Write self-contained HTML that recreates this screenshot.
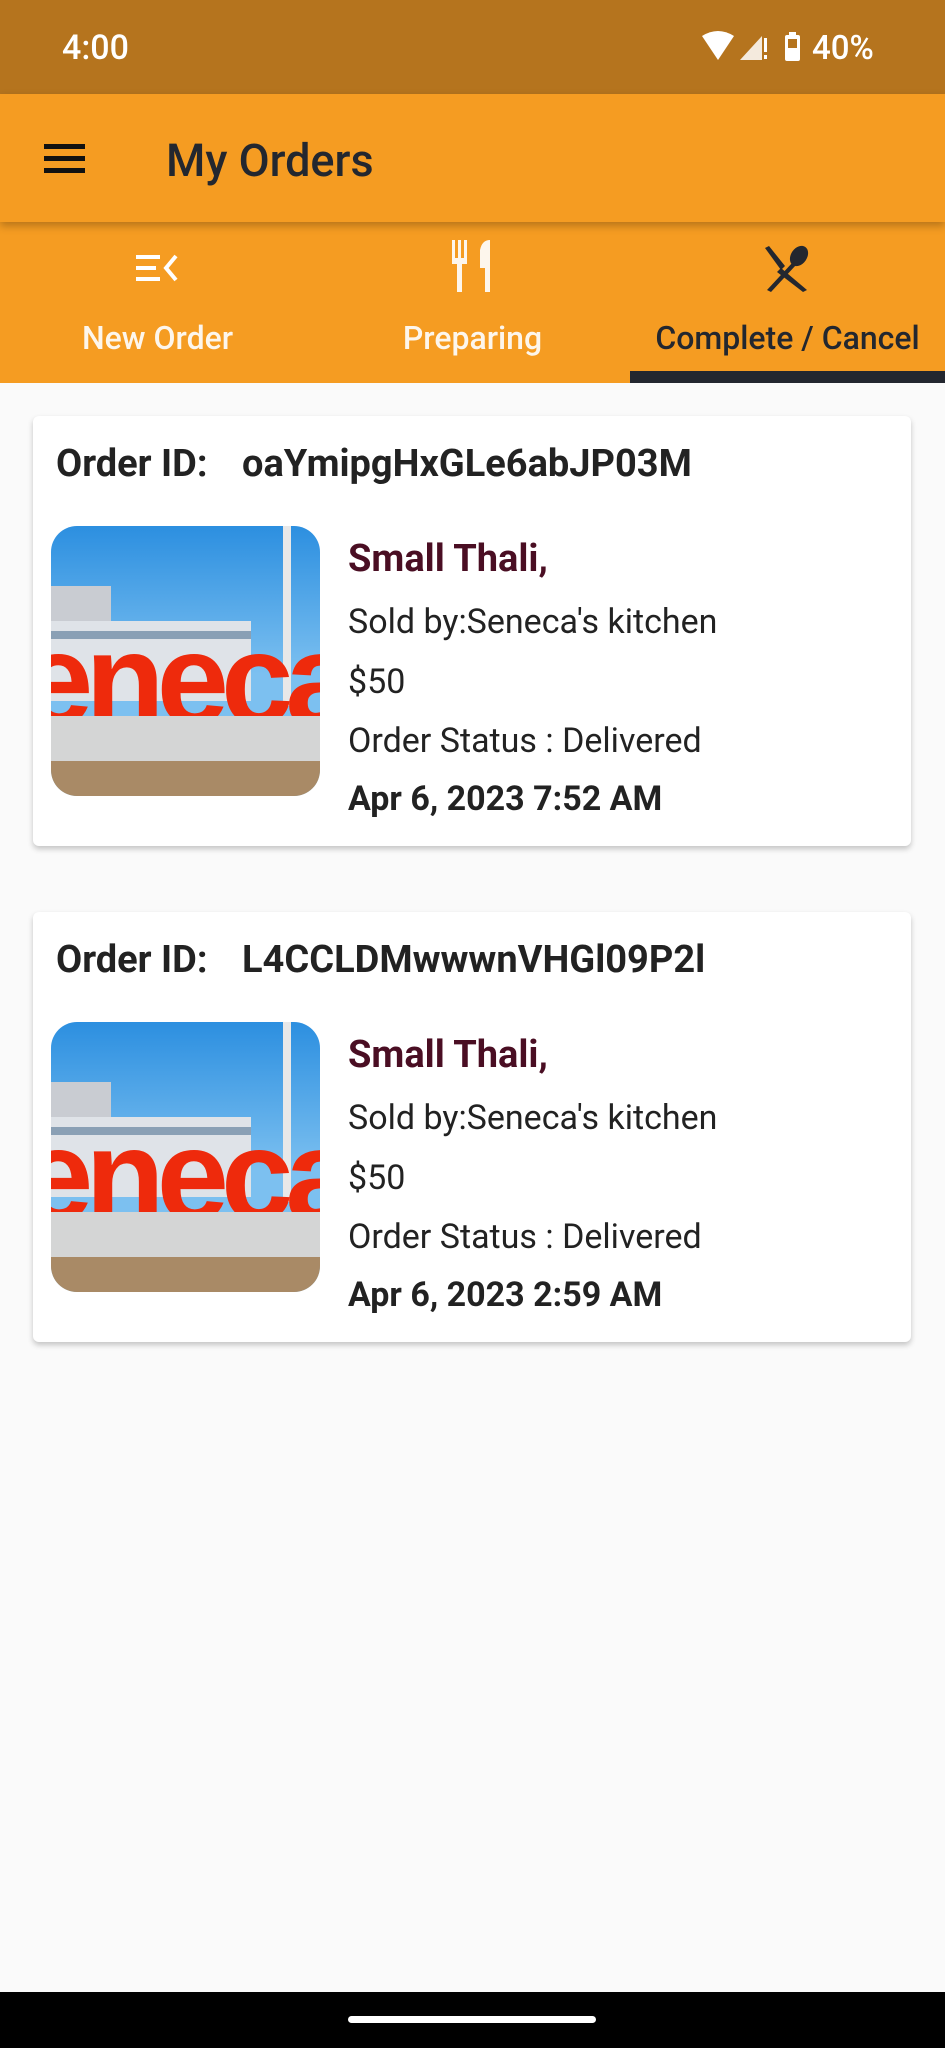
<!DOCTYPE html>
<html><head><meta charset="utf-8"><style>
*{margin:0;padding:0;box-sizing:border-box}
body{width:945px;height:2048px;background:#fafafa;font-family:"Roboto","Liberation Sans",sans-serif;position:relative;overflow:hidden}
.abs{position:absolute}
.status{top:0;left:0;width:945px;height:94px;background:#b5741e}
.bar{top:94px;left:0;width:945px;height:128px;background:#f59c22;box-shadow:0 4px 8px rgba(0,0,0,.25);z-index:2}
.tabs{top:222px;left:0;width:945px;height:161px;background:#f59c22}
.lab{position:absolute;top:97px;font-size:32px;font-weight:500;text-align:center;width:315px}
.card{position:absolute;left:33px;width:878px;height:430px;background:#fff;border-radius:6px;box-shadow:0 3px 6px rgba(0,0,0,.22)}
.oid{position:absolute;top:26px;font-size:38px;font-weight:bold;color:#222;white-space:pre}
.img{position:absolute;left:18px;top:110px;width:269px;height:270px;border-radius:26px;overflow:hidden;background:linear-gradient(#2c8fe0,#7cc0f0 55%)}
.t{position:absolute;left:315px;font-size:34px;color:#222;white-space:nowrap}
</style></head><body>
<div class="abs status">
 <div class="abs" style="left:62px;top:28px;font-size:34px;font-weight:500;color:#fff">4:00</div>
 <svg class="abs" style="left:700px;top:28px" width="190" height="38" viewBox="0 0 190 38">
  <path d="M2 8 Q18 -2 34 8 L18 32 Z" fill="#fff"/>
  <path d="M40 32 L62 8 L62 32 Z" fill="#fff" opacity=".85"/>
  <rect x="64" y="10" width="3" height="14" fill="#fff"/><rect x="64" y="27" width="3" height="4" fill="#fff"/>
  <rect x="85" y="7" width="15" height="26" rx="2" fill="#fff"/><rect x="89" y="4" width="7" height="4" fill="#fff"/>
  <rect x="88" y="11" width="9" height="9" fill="#b5741e"/>
  <text x="112" y="31" font-size="33" font-weight="500" fill="#fff" font-family="Roboto,Liberation Sans">40%</text>
 </svg>
</div>
<div class="abs bar">
 <div class="abs" style="left:44px;top:50px;width:41px;height:5px;background:#111;box-shadow:0 12px 0 #111,0 24px 0 #111"></div>
 <div class="abs" style="left:166px;top:40px;font-size:45px;font-weight:500;color:#23272f">My Orders</div>
</div>
<div class="abs tabs">
 <svg class="abs" style="left:136px;top:30px" width="44" height="34" viewBox="0 0 44 34"><g fill="#fff"><rect x="0" y="3" width="24" height="4"/><rect x="0" y="14" width="20" height="4"/><rect x="0" y="25" width="24" height="4"/></g><path d="M40 4 L30 16 L40 28" stroke="#fff" stroke-width="4" fill="none"/></svg>
 <svg class="abs" style="left:450px;top:18px" width="46" height="52" viewBox="0 0 46 52"><g fill="#fdf6ec"><rect x="2" y="0" width="3" height="20"/><rect x="8" y="0" width="3" height="20"/><rect x="14" y="0" width="3" height="20"/><rect x="2" y="18" width="15" height="6"/><rect x="7" y="22" width="5" height="30"/><path d="M30 10 Q32 0 40 0 L40 52 L35 52 L35 28 L30 28 Z"/></g></svg>
 <svg class="abs" style="left:763px;top:22px" width="48" height="48" viewBox="0 0 48 48"><g fill="#23272f"><path d="M2 4 L6 2 L22 22 L18 26 Z"/><path d="M18 24 L44 46 L40 48 L14 28 Z" /><ellipse cx="36" cy="12" rx="8" ry="11" transform="rotate(35 36 12)"/><path d="M30 18 L4 46 L8 48 L33 21Z"/></g></svg>
 <div class="lab" style="left:0;color:#fdf6ec">New Order</div>
 <div class="lab" style="left:315px;color:#fdf6ec">Preparing</div>
 <div class="lab" style="left:630px;color:#23272f">Complete / Cancel</div>
 <div class="abs" style="left:630px;top:149px;width:315px;height:12px;background:#23272f"></div>
</div>

<div class="card" style="top:416px">
 <div class="oid" style="left:23px">Order ID:</div>
 <div class="oid" style="left:209px">oaYmipgHxGLe6abJP03M</div>
 <div class="img">
  <div class="abs" style="left:0;top:60px;width:60px;height:70px;background:#c9ccd2"></div>
  <div class="abs" style="left:0;top:95px;width:200px;height:80px;background:#dfe3e8"></div>
  <div class="abs" style="left:0;top:105px;width:200px;height:8px;background:#8aa0b5"></div>
  <div class="abs" style="left:232px;top:0;width:8px;height:180px;background:#e8e8e8"></div>
  <div class="abs" style="left:-30px;top:78px;font-size:130px;font-weight:bold;color:#ee2a0c;letter-spacing:-8px;font-family:'Liberation Sans',sans-serif">eneca</div>
  <div class="abs" style="left:0;top:190px;width:269px;height:45px;background:#d4d5d5"></div>
  <div class="abs" style="left:0;top:235px;width:269px;height:35px;background:#a98a66"></div>
 </div>
 <div class="t" style="top:121px;font-size:38px;font-weight:bold;color:#4a0e23">Small Thali,</div>
 <div class="t" style="top:186px">Sold by:Seneca's kitchen</div>
 <div class="t" style="top:246px">$50</div>
 <div class="t" style="top:305px">Order Status : Delivered</div>
 <div class="t" style="top:363px;font-weight:bold">Apr 6, 2023 7:52 AM</div>
</div>

<div class="card" style="top:912px">
 <div class="oid" style="left:23px">Order ID:</div>
 <div class="oid" style="left:209px">L4CCLDMwwwnVHGl09P2l</div>
 <div class="img">
  <div class="abs" style="left:0;top:60px;width:60px;height:70px;background:#c9ccd2"></div>
  <div class="abs" style="left:0;top:95px;width:200px;height:80px;background:#dfe3e8"></div>
  <div class="abs" style="left:0;top:105px;width:200px;height:8px;background:#8aa0b5"></div>
  <div class="abs" style="left:232px;top:0;width:8px;height:180px;background:#e8e8e8"></div>
  <div class="abs" style="left:-30px;top:78px;font-size:130px;font-weight:bold;color:#ee2a0c;letter-spacing:-8px;font-family:'Liberation Sans',sans-serif">eneca</div>
  <div class="abs" style="left:0;top:190px;width:269px;height:45px;background:#d4d5d5"></div>
  <div class="abs" style="left:0;top:235px;width:269px;height:35px;background:#a98a66"></div>
 </div>
 <div class="t" style="top:121px;font-size:38px;font-weight:bold;color:#4a0e23">Small Thali,</div>
 <div class="t" style="top:186px">Sold by:Seneca's kitchen</div>
 <div class="t" style="top:246px">$50</div>
 <div class="t" style="top:305px">Order Status : Delivered</div>
 <div class="t" style="top:363px;font-weight:bold">Apr 6, 2023 2:59 AM</div>
</div>

<div class="abs" style="left:0;top:1992px;width:945px;height:56px;background:#000">
 <div class="abs" style="left:348px;top:24px;width:248px;height:7px;border-radius:4px;background:#fff"></div>
</div>
</body></html>
